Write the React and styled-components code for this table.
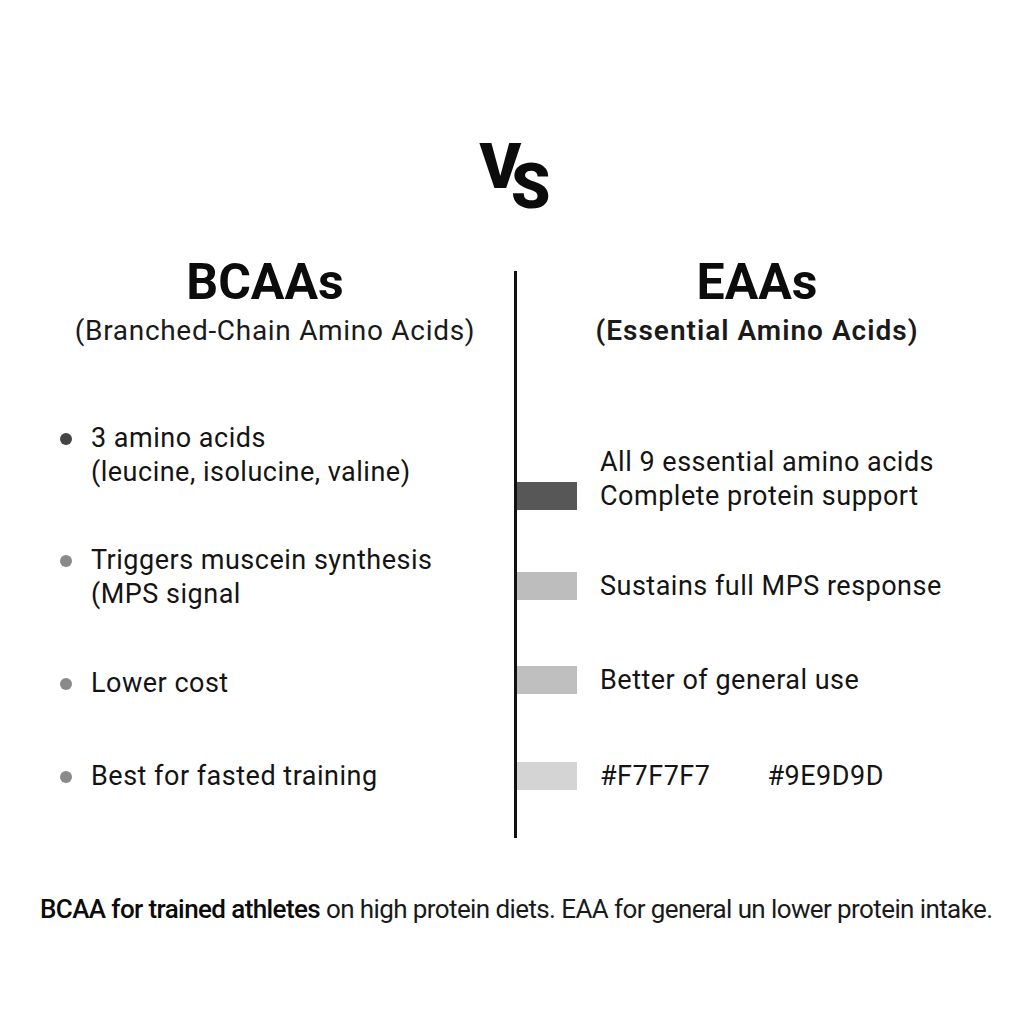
import React from "react";
import styled, { createGlobalStyle } from "styled-components";

const GlobalStyle = createGlobalStyle`
  html, body {
    margin: 0;
    padding: 0;
    background: #ffffff;
  }
  body {
    font-family: Roboto, "Noto Sans", "Liberation Sans", sans-serif;
    color: #111111;
  }
`;

// space = gap above the item, in px
const bcaaPoints = [
  { lines: ["3 amino acids", "(leucine, isolucine, valine)"], dot: "#444444", space: 0 },
  { lines: ["Triggers muscein synthesis", "(MPS signal"], dot: "#8a8a8a", space: 54 },
  { lines: ["Lower cost"], dot: "#8a8a8a", space: 55 },
  { lines: ["Best for fasted training"], dot: "#8a8a8a", space: 59 },
];

const eaaPoints = [
  { lines: ["All 9 essential amino acids", "Complete protein support"], bar: "#575757", space: 0 },
  { lines: ["Sustains full MPS response"], bar: "#bdbdbd", space: 56 },
  { lines: ["Better of general use"], bar: "#bfbfbf", space: 60 },
  { lines: ["#F7F7F7", "#9E9D9D"], bar: "#d4d4d4", space: 62, swatch: true },
];

const App = () => {
  return (
    <>
      <GlobalStyle />
      <Page>
        {/* VS mark */}
        <Versus>
          <span>V</span>
          <Lowered>S</Lowered>
        </Versus>

        <Compare>
          {/* BCAA column */}
          <Column>
            <Heading>BCAAs</Heading>
            <Subtitle $shift={20}>(Branched-Chain Amino Acids)</Subtitle>
            <BulletList>
              {bcaaPoints.map((p, i) => (
                <BulletItem key={i} $space={p.space}>
                  <Dot $color={p.dot} />
                  <ItemText>
                    {p.lines.map((l) => (
                      <div key={l}>{l}</div>
                    ))}
                  </ItemText>
                </BulletItem>
              ))}
            </BulletList>
          </Column>

          <Divider />

          {/* EAA column */}
          <Column>
            <Heading>EAAs</Heading>
            <Subtitle $strong>(Essential Amino Acids)</Subtitle>
            <BarList>
              {eaaPoints.map((p, i) => (
                <BarRow key={i} $space={p.space}>
                  <Bar $color={p.bar} />
                  {p.swatch ? (
                    <Swatches>
                      {p.lines.map((l) => (
                        <span key={l}>{l}</span>
                      ))}
                    </Swatches>
                  ) : (
                    <ItemText>
                      {p.lines.map((l) => (
                        <div key={l}>{l}</div>
                      ))}
                    </ItemText>
                  )}
                </BarRow>
              ))}
            </BarList>
          </Column>
        </Compare>

        <Summary>
          <strong>BCAA for trained athletes</strong> on high protein diets. EAA
          for general un lower protein intake.
        </Summary>
      </Page>
    </>
  );
};

const Page = styled.main`
  width: 1024px;
  height: 1024px;
  box-sizing: border-box;
  padding-top: 135px;
  display: flex;
  flex-direction: column;
  align-items: stretch;
  overflow: hidden;
`;

const Versus = styled.div`
  display: flex;
  justify-content: center;
  align-items: flex-start;
  font-size: 63px;
  line-height: 1;
  font-weight: 900;
  letter-spacing: -10px;
  color: #0c0c0c;
  padding-right: 4px;
`;

const Lowered = styled.span`
  margin-top: 20px;
`;

const Compare = styled.section`
  display: grid;
  grid-template-columns: 498px 3px 480px;
  padding-left: 16px;
  margin-top: 36px;
  align-items: start;
`;

const Column = styled.div`
  display: flex;
  flex-direction: column;
`;

const Heading = styled.h2`
  margin: 0;
  text-align: center;
  font-size: 50px;
  line-height: 56px;
  font-weight: 700;
  color: #0c0c0c;
`;

const Subtitle = styled.p`
  margin: 4px 0 0;
  padding-left: ${({ $shift }) => $shift || 0}px;
  text-align: center;
  font-size: 28px;
  line-height: 34px;
  letter-spacing: ${({ $strong }) => ($strong ? "1px" : "0.7px")};
  font-weight: ${({ $strong }) => ($strong ? 600 : 400)};
  color: #1a1a1a;
`;

const BulletList = styled.ul`
  list-style: none;
  margin: 73px 0 0;
  padding: 0 0 0 44px;
  display: flex;
  flex-direction: column;
`;

const BulletItem = styled.li`
  display: flex;
  align-items: flex-start;
  gap: 19px;
  margin-top: ${({ $space }) => $space}px;
`;

const Dot = styled.span`
  flex: none;
  width: 12px;
  height: 12px;
  margin-top: 12px;
  border-radius: 50%;
  background: ${({ $color }) => $color};
`;

const ItemText = styled.div`
  font-size: 27px;
  line-height: 34px;
  letter-spacing: 0.5px;
  color: #141414;
`;

const Divider = styled.div`
  width: 3px;
  height: 567px;
  margin-top: 17px;
  background: #111111;
`;

const BarList = styled.ul`
  list-style: none;
  margin: 97px 0 0;
  padding: 0;
  display: flex;
  flex-direction: column;
`;

const BarRow = styled.li`
  display: flex;
  align-items: flex-end;
  gap: 23px;
  margin-top: ${({ $space }) => $space}px;
`;

const Bar = styled.span`
  flex: none;
  width: 60px;
  height: 28px;
  margin-bottom: 3px;
  background: ${({ $color }) => $color};
`;

const Swatches = styled.div`
  display: flex;
  gap: 57px;
  font-size: 27px;
  line-height: 34px;
  letter-spacing: 0.5px;
  color: #141414;
`;

const Summary = styled.p`
  margin: 56px 0 0;
  padding-left: 40px;
  font-size: 26px;
  line-height: 30px;
  color: #1a1a1a;
  letter-spacing: -0.6px;
  white-space: nowrap;

  strong {
    font-weight: 500;
    color: #0c0c0c;
  }
`;

export default App;
